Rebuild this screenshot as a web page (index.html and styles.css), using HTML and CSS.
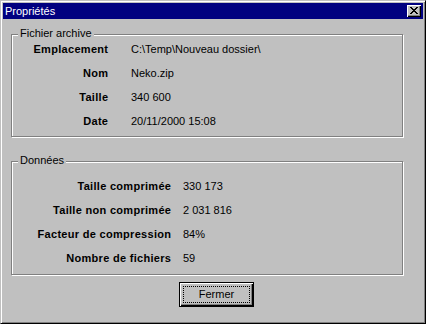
FILE: index.html
```html
<!DOCTYPE html>
<html lang="fr">
<head>
<meta charset="utf-8">
<title>Propriétés</title>
<link rel="stylesheet" href="styles.css">
</head>
<body>
<div class="window">
  <div class="titlebar">
    <span class="title">Propriétés</span>
    <span class="close">
      <svg width="8" height="7" viewBox="0 0 8 7" shape-rendering="crispEdges">
        <path fill="#000" d="M0 0h2v1h-2zM6 0h2v1h-2zM1 1h2v1h-2zM5 1h2v1h-2zM2 2h4v1h-4zM3 3h2v1h-2zM2 4h4v1h-4zM1 5h2v1h-2zM5 5h2v1h-2zM0 6h2v1h-2zM6 6h2v1h-2z"/>
      </svg>
    </span>
  </div>
  <div class="body">
    <div class="group group-archive">
      <span class="legend">Fichier archive</span>
      <div class="rows rows-archive">
        <span class="label">Emplacement</span><span class="value">C:\Temp\Nouveau dossier\</span>
        <span class="label">Nom</span><span class="value">Neko.zip</span>
        <span class="label">Taille</span><span class="value">340 600</span>
        <span class="label">Date</span><span class="value">20/11/2000 15:08</span>
      </div>
    </div>
    <div class="group group-data">
      <span class="legend">Données</span>
      <div class="rows rows-data">
        <span class="label">Taille comprimée</span><span class="value">330 173</span>
        <span class="label">Taille non comprimée</span><span class="value">2 031 816</span>
        <span class="label">Facteur de compression</span><span class="value">84%</span>
        <span class="label">Nombre de fichiers</span><span class="value">59</span>
      </div>
    </div>
    <div class="actions">
      <button class="btn" type="button"><span class="btn-inner"><span class="focus">Fermer</span></span></button>
    </div>
  </div>
</div>
</body>
</html>
```

FILE: styles.css
```css
* { box-sizing: border-box; }
html, body { margin: 0; padding: 0; }
body {
  background: #c0c0c0;
  font-family: "Liberation Sans", Arial, sans-serif;
  font-size: 11px;
  color: #000;
}
.window {
  width: 426px;
  height: 324px;
  background: #c0c0c0;
  border: 1px solid;
  border-color: #c0c0c0 #000 #000 #c0c0c0;
  box-shadow: inset 1px 1px #fff, inset -1px -1px #808080;
  padding: 2px;
  display: flex;
  flex-direction: column;
}
.titlebar {
  height: 16px;
  background: #000080;
  color: #fff;
  display: flex;
  align-items: center;
  justify-content: space-between;
  padding: 0 2px 0 2px;
}
.title {
  font-size: 11px;
  line-height: 13px;
}
.close {
  width: 14px;
  height: 12px;
  background: #c0c0c0;
  box-shadow: inset 1px 1px #fff, inset -1px -1px #000, inset -2px -2px #808080;
  display: flex;
  align-items: center;
  justify-content: center;
  padding: 0 1px 1px 0;
}
.close svg { display: block; }
.body {
  padding: 15px 0 0 8px;
  display: flex;
  flex-direction: column;
}
.group {
  position: relative;
  width: 392px;
  border: 1px solid #808080;
  box-shadow: inset 1px 1px #fff, 1px 1px #fff;
}
.group-archive {
  height: 103px;
  padding-top: 2px;
}
.group-data {
  height: 114px;
  margin-top: 24px;
  padding-top: 12px;
}
.legend {
  position: absolute;
  left: 6px;
  top: -8px;
  padding: 0 2px;
  background: #c0c0c0;
  line-height: 13px;
}
.rows {
  display: grid;
  grid-auto-rows: 24px;
  align-items: center;
}
.rows-archive { grid-template-columns: 96px auto; column-gap: 23px; }
.rows-data { grid-template-columns: 159px auto; column-gap: 12px; }
.label {
  font-weight: bold;
  letter-spacing: 0.3px;
  text-align: right;
  white-space: nowrap;
  margin-right: -0.3px;
}
.value { white-space: nowrap; }
.actions {
  margin-top: 7px;
  padding-left: 168px;
  display: flex;
}
.btn {
  width: 75px;
  height: 25px;
  padding: 0;
  margin: 0;
  border: 1px solid #000;
  background: #c0c0c0;
  font: inherit;
  color: #000;
  display: flex;
}
.btn-inner {
  flex: 1;
  display: flex;
  padding: 3px;
  box-shadow: inset 1px 1px #fff, inset -1px -1px #000, inset -2px -2px #808080;
}
.focus {
  flex: 1;
  border: 1px dotted #000;
  display: flex;
  align-items: center;
  justify-content: center;
  line-height: 13px;
}
```
